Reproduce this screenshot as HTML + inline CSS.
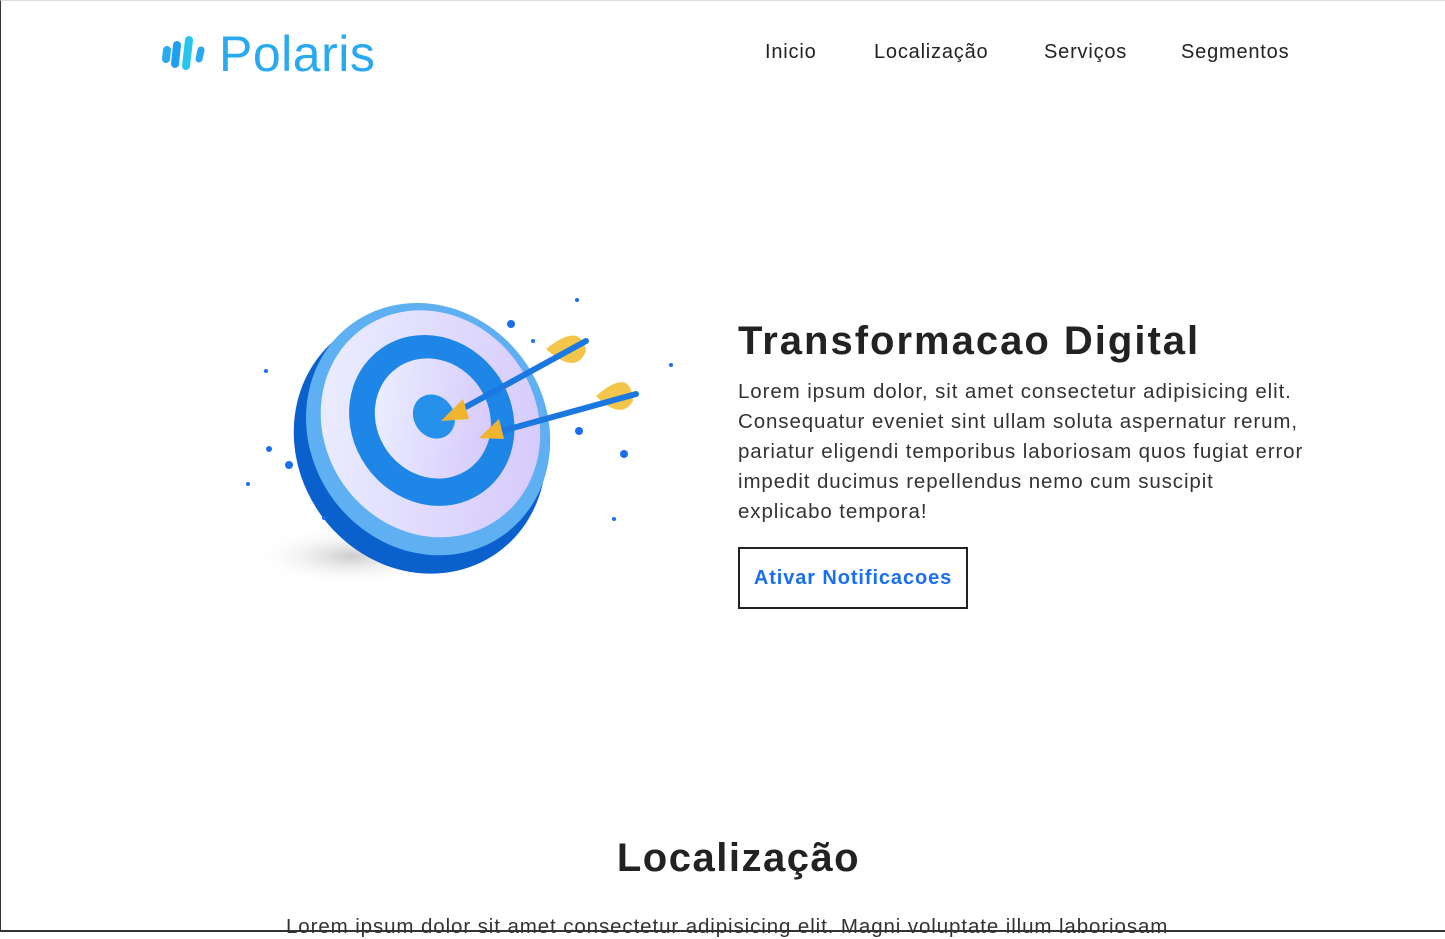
<!DOCTYPE html>
<html><head><meta charset="utf-8"><style>
html,body{margin:0;padding:0}
body{width:1445px;height:932px;overflow:hidden;background:#fff;font-family:"Liberation Sans",sans-serif;color:#222;position:relative;box-sizing:border-box;border-left:1px solid #333;border-top:1px solid #ddd;border-bottom:2px solid #333}
.logo{position:absolute;left:160px;top:24px;display:flex;align-items:center}
.logo span{font-size:50px;color:#29a9ef;margin-left:10px;letter-spacing:0.5px}
nav{position:absolute;top:40px;left:764px;font-size:20px;color:#222;letter-spacing:0.8px}
nav a{position:absolute;white-space:nowrap}
h1{position:absolute;left:737px;top:318px;margin:0;font-size:40px;font-weight:bold;color:#222;letter-spacing:2px}
p.t{position:absolute;left:737px;top:376px;margin:0;font-size:20.5px;line-height:30px;color:#333;white-space:nowrap;letter-spacing:0.9px}
.btn{position:absolute;left:737px;top:546px;width:226px;height:58px;border:2px solid #222;color:#1a6ff0;font-weight:bold;font-size:20px;line-height:58px;text-align:center;letter-spacing:0.9px}
h2{position:absolute;left:0;width:1475px;text-align:center;top:835px;margin:0;font-size:40px;font-weight:bold;color:#222;letter-spacing:1.5px}
p.b{position:absolute;left:285px;top:914px;margin:0;font-size:20.5px;color:#333;white-space:nowrap;letter-spacing:0.9px}
</style></head><body>
<div class="logo">
<svg width="48" height="40" viewBox="0 0 48 40"><g stroke-linecap="round" fill="none"><line x1="6" y1="16" x2="5" y2="25" stroke="#2aa8f0" stroke-width="8"/><line x1="16" y1="11" x2="14" y2="30" stroke="#1ea0f0" stroke-width="8"/><line x1="28" y1="6" x2="25" y2="32" stroke="#27c4f0" stroke-width="8"/><line x1="40" y1="16" x2="38" y2="25" stroke="#2aa8f0" stroke-width="7"/></g></svg>
<span>Polaris</span></div>
<nav><a style="left:0">Inicio</a><a style="left:109px">Localização</a><a style="left:279px">Serviços</a><a style="left:416px">Segmentos</a></nav>
<svg style="position:absolute;left:240px;top:280px" width="450" height="320" viewBox="0 0 450 320">
<defs><radialGradient id="sh"><stop offset="0" stop-color="#ccc"/><stop offset="1" stop-color="#fff" stop-opacity="0"/></radialGradient>
<linearGradient id="lav" x1="0" y1="0" x2="1" y2="1"><stop offset="0" stop-color="#eef3ff"/><stop offset="1" stop-color="#d3c4fb"/></linearGradient></defs>
<ellipse cx="110" cy="275" rx="100" ry="30" fill="url(#sh)"/>
<g transform="translate(28 -4) rotate(-35 155 155)">
<ellipse cx="145" cy="162" rx="122" ry="134" fill="#0a60cc"/>
<ellipse cx="160" cy="155" rx="118" ry="130" fill="#5fb0f3"/>
<ellipse cx="165" cy="152" rx="106" ry="117" fill="url(#lav)"/>
<ellipse cx="168" cy="150" rx="80" ry="88" fill="#1d86e6"/>
<ellipse cx="170" cy="149" rx="56" ry="62" fill="url(#lav)"/>
<ellipse cx="172" cy="148" rx="20" ry="23" fill="#2591ea"/>
</g>
<g stroke-linecap="round">
<path d="M305 68 Q340 40 345 70 Q335 95 305 68Z" fill="#f3c64b"/>
<path d="M355 115 Q390 85 392 120 Q380 140 355 115Z" fill="#f3c64b"/>
<line x1="212" y1="133" x2="345" y2="60" stroke="#1a78e0" stroke-width="6"/>
<line x1="250" y1="153" x2="395" y2="113" stroke="#1a78e0" stroke-width="6"/>
<polygon points="200,140 222,118 228,138" fill="#f0b430"/>
<polygon points="238,157 258,138 263,158" fill="#f0b430"/>
</g>
<g fill="#1a6ff0">
<circle cx="270" cy="43" r="4"/><circle cx="338" cy="150" r="4"/><circle cx="383" cy="173" r="4"/><circle cx="48" cy="184" r="4"/><circle cx="28" cy="168" r="3"/><circle cx="336" cy="19" r="2"/><circle cx="373" cy="238" r="2"/><circle cx="83" cy="237" r="2"/><circle cx="7" cy="203" r="2"/><circle cx="292" cy="60" r="2"/><circle cx="430" cy="84" r="2"/><circle cx="25" cy="90" r="2"/></g>
</svg>
<h1>Transformacao Digital</h1>
<p class="t">Lorem ipsum dolor, sit amet consectetur adipisicing elit.<br>Consequatur eveniet sint ullam soluta aspernatur rerum,<br>pariatur eligendi temporibus laboriosam quos fugiat error<br>impedit ducimus repellendus nemo cum suscipit<br>explicabo tempora!</p>
<div class="btn">Ativar Notificacoes</div>
<h2>Localização</h2>
<p class="b">Lorem ipsum dolor sit amet consectetur adipisicing elit. Magni voluptate illum laboriosam</p>
</body></html>
